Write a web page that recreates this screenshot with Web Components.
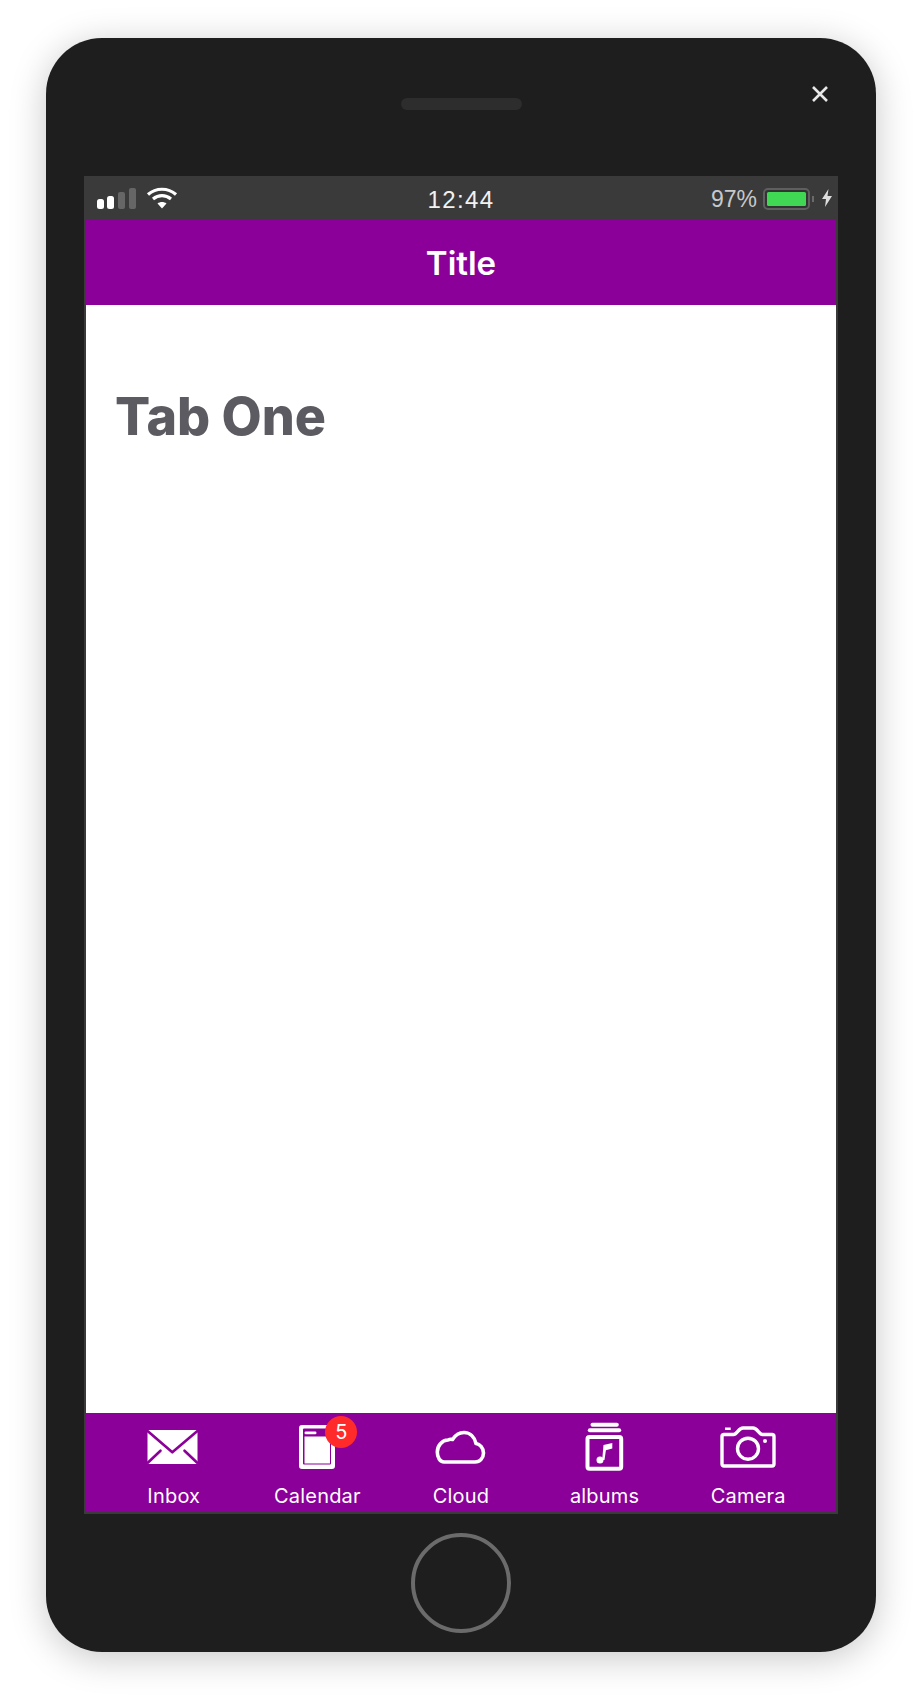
<!DOCTYPE html>
<html lang="en">
<head>
<meta charset="utf-8">
<title>Tab One</title>
<style>
  html, body { margin: 0; background: #fff; }
  body { font-family: Inter, "Liberation Sans", sans-serif; }
</style>
</head>
<body>
<phone-frame>
  <status-bar></status-bar>
  <app-header>Title</app-header>
  <tab-page>Tab One</tab-page>
  <tab-bar>
    <tab-item label="Inbox" icon="inbox"></tab-item>
    <tab-item label="Calendar" icon="calendar" badge="5"></tab-item>
    <tab-item label="Cloud" icon="cloud"></tab-item>
    <tab-item label="albums" icon="albums"></tab-item>
    <tab-item label="Camera" icon="camera"></tab-item>
  </tab-bar>
</phone-frame>

<script>
const PURPLE = '#8b0099';

class PhoneFrame extends HTMLElement {
  constructor() {
    super();
    this.attachShadow({ mode: 'open' });
    this.shadowRoot.innerHTML = `
      <style>
        :host {
          display: block;
          width: 830px;
          margin: 38px auto 54px;
        }
        .body {
          position: relative;
          display: flex;
          flex-direction: column;
          background: #1e1e1e;
          border-radius: 56px;
          box-shadow: 0 6px 36px rgba(0, 0, 0, .22);
        }
        .top {
          height: 138px;
          display: flex;
          align-items: center;
          justify-content: center;
        }
        .speaker {
          width: 121px;
          height: 12px;
          margin-top: -6px;
          border-radius: 6px;
          background: #2d2d2d;
        }
        .close {
          position: absolute;
          top: 47px;
          right: 47px;
          width: 18px;
          height: 18px;
        }
        .screen {
          margin: 0 38px;
          height: 1334px;
          display: flex;
          flex-direction: column;
          border: 2px solid #3a3a3a;
          background: #fff;
        }
        .bottom {
          height: 138px;
          display: flex;
          align-items: center;
          justify-content: center;
        }
        .home {
          box-sizing: border-box;
          width: 100px;
          height: 100px;
          border: 4px solid #6b6b6b;
          border-radius: 50%;
        }
      </style>
      <div class="body">
        <div class="top"><div class="speaker"></div></div>
        <svg class="close" viewBox="0 0 18 18">
          <path d="M2 2 16 16M16 2 2 16" stroke="#e8e8e8" stroke-width="2.6" fill="none"/>
        </svg>
        <div class="screen"><slot></slot></div>
        <div class="bottom"><div class="home"></div></div>
      </div>
    `;
  }
}

class StatusBar extends HTMLElement {
  constructor() {
    super();
    this.attachShadow({ mode: 'open' });
    this.shadowRoot.innerHTML = `
      <style>
        :host {
          display: grid;
          grid-template-columns: 1fr auto 1fr;
          align-items: center;
          height: 42px;
          flex: none;
          box-sizing: border-box;
          padding: 0 11px;
          background: #3a3a3a;
          color: #f2f2f2;
          font-family: "Liberation Sans", Arial, sans-serif;
        }
        .left { display: flex; align-items: center; gap: 10px; }
        .time { font-size: 24px; letter-spacing: 1.4px; margin-top: 2px; }
        .right {
          display: flex;
          align-items: center;
          justify-content: flex-end;
          gap: 6px;
          margin-right: -7px;
          color: #c9c9c9;
          font-size: 23px;
        }
        svg { display: block; }
      </style>
      <div class="left">
        <svg width="39" height="24" viewBox="0 0 39 24">
          <rect x="0" y="12" width="7" height="10" rx="2.5" fill="#fff"/>
          <rect x="10" y="9" width="7" height="13" rx="2.5" fill="#fff"/>
          <rect x="21" y="5" width="7" height="17" rx="2" fill="#666"/>
          <rect x="32" y="1" width="7" height="21" rx="2" fill="#666"/>
        </svg>
        <svg width="32" height="24" viewBox="0 0 32 24">
          <path d="M2 7.5C10 .5 22 .5 30 7.5M7 12C12.5 7.5 19.5 7.5 25 12" stroke="#fff" stroke-width="3.2" fill="none"/>
          <path d="M11.5 16.5C14 14.5 18 14.5 20.5 16.5L16 21.5Z" fill="#fff"/>
        </svg>
      </div>
      <div class="time">12:44</div>
      <div class="right">
        <span>97%</span>
        <svg width="53" height="24" viewBox="0 0 53 24">
          <rect x="1" y="2" width="45" height="20" rx="4" fill="#333" stroke="#5f5f5f" stroke-width="2"/>
          <rect x="4" y="5" width="39" height="14" rx="1.5" fill="#3fd754"/>
          <rect x="49" y="9" width="2" height="6" fill="#6a6a6a"/>
        </svg>
        <svg width="10" height="24" viewBox="0 0 10 24">
          <path d="M6.5 2 0 12H4L3 20 10 9H5.5Z" fill="#ddd"/>
        </svg>
      </div>
    `;
  }
}

class AppHeader extends HTMLElement {
  constructor() {
    super();
    this.attachShadow({ mode: 'open' });
    this.shadowRoot.innerHTML = `
      <style>
        :host {
          display: flex;
          flex: none;
          align-items: center;
          justify-content: center;
          height: 85px;
          background: ${PURPLE};
          color: #fff;
          font-size: 33px;
          font-weight: 600;
        }
      </style>
      <slot></slot>
    `;
  }
}

class TabPage extends HTMLElement {
  constructor() {
    super();
    this.attachShadow({ mode: 'open' });
    this.shadowRoot.innerHTML = `
      <style>
        :host {
          display: block;
          flex: 1;
          padding: 81px 29px 0;
          color: #5b5b61;
          font-size: 52px;
          font-weight: 800;
          line-height: 62px;
        }
      </style>
      <slot></slot>
    `;
  }
}

class TabBar extends HTMLElement {
  constructor() {
    super();
    this.attachShadow({ mode: 'open' });
    this.shadowRoot.innerHTML = `
      <style>
        :host {
          display: grid;
          flex: none;
          grid-template-columns: repeat(5, 1fr);
          height: 99px;
          padding: 0 16px;
          background: ${PURPLE};
        }
      </style>
      <slot></slot>
    `;
  }
}

const ICONS = {
  inbox: `
    <g transform="translate(-1.5 0)">
      <rect x="5" y="8" width="50" height="34" rx="1" fill="#fff"/>
      <path d="M4.5 8.5 29.8 30.3 55.5 8.5M18 28.7 5.3 40.7M42 28.7 54.7 40.7" stroke="${PURPLE}" stroke-width="2.6" fill="none" stroke-linecap="round" stroke-linejoin="round"/>
    </g>`,
  calendar: `
    <rect x="12" y="3" width="36" height="44" rx="3" fill="#fff"/>
    <rect x="16" y="6.5" width="28" height="36" rx="1" fill="${PURPLE}"/>
    <rect x="17.5" y="9.5" width="12" height="2.8" rx="1.4" fill="#fff"/>
    <rect x="17.5" y="14.5" width="25.5" height="27" fill="#fff"/>`,
  cloud: `
    <path d="M13 40H44C49 40 52.5 36 52.5 31C52.5 26 49 22 45 21.5C43.5 15 39 10.5 33 10.5C28 10.5 24 13.5 21.5 17.5C20 17 18 17.5 17 18C11 18 6.3 24 6.3 30C6.3 35.5 9 40 13 40Z" stroke="#fff" stroke-width="3.6" fill="none" stroke-linejoin="round"/>`,
  albums: `
    <rect x="15.5" y=".7" width="28.3" height="4" rx="2" fill="#fff"/>
    <rect x="12.8" y="6.3" width="33.4" height="4" rx="2" fill="#fff"/>
    <rect x="12.5" y="15" width="33.7" height="31.7" rx="2" stroke="#fff" stroke-width="4" fill="none"/>
    <circle cx="25" cy="38" r="3.5" fill="#fff"/>
    <path d="M27.2 38 28.5 23 37.3 21V26.5L30.9 28.3 29.5 38Z" fill="#fff"/>`,
  camera: `
    <path d="M6 12.5H15.5C19 12.5 20.5 6 25 6H35C39.5 6 41 12.5 44.5 12.5H54C55.2 12.5 56 13.3 56 14.5V42C56 43.2 55.2 44 54 44H6C4.8 44 4 43.2 4 42V14.5C4 13.3 4.8 12.5 6 12.5Z" stroke="#fff" stroke-width="3.4" fill="none" stroke-linejoin="round"/>
    <circle cx="30" cy="26.7" r="10.5" stroke="#fff" stroke-width="3.4" fill="none"/>
    <circle cx="47" cy="19" r="2" fill="#fff"/>
    <rect x="7" y="5.5" width="5.7" height="2.5" fill="#fff"/>`
};

class TabItem extends HTMLElement {
  constructor() {
    super();
    this.attachShadow({ mode: 'open' });
  }

  connectedCallback() {
    const badge = this.getAttribute('badge');
    this.shadowRoot.innerHTML = `
      <style>
        :host {
          display: flex;
          flex-direction: column;
          align-items: center;
          padding-top: 9px;
          color: #fff;
          font-size: 20px;
          letter-spacing: .2px;
        }
        .icon { position: relative; width: 60px; height: 52px; }
        svg { display: block; }
        .badge {
          position: absolute;
          top: -6px;
          left: 38px;
          width: 32px;
          height: 32px;
          border-radius: 50%;
          background: #ff2a2a;
          display: flex;
          align-items: center;
          justify-content: center;
          font-size: 20px;
          letter-spacing: 0;
        }
        .label { margin-top: 7px; line-height: 30px; }
      </style>
      <div class="icon">
        <svg width="60" height="52" viewBox="0 0 60 52">${ICONS[this.getAttribute('icon')]}</svg>
        ${badge ? `<span class="badge">${badge}</span>` : ''}
      </div>
      <div class="label">${this.getAttribute('label')}</div>
    `;
  }
}

customElements.define('phone-frame', PhoneFrame);
customElements.define('status-bar', StatusBar);
customElements.define('app-header', AppHeader);
customElements.define('tab-page', TabPage);
customElements.define('tab-bar', TabBar);
customElements.define('tab-item', TabItem);
</script>
</body>
</html>
